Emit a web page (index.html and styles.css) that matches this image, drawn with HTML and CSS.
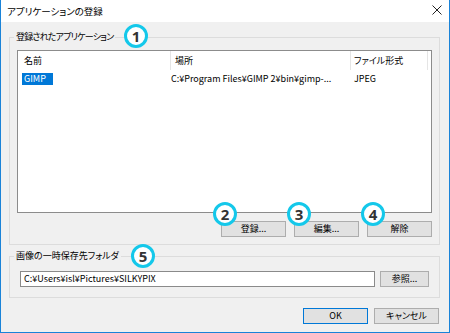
FILE: index.html
```html
<!DOCTYPE html>
<html lang="ja">
<head>
  <meta charset="UTF-8">
  <title>アプリケーションの登録</title>
  <link rel="stylesheet" href="styles.css">
</head>
<body>
  <div class="window">
    <div class="titlebar">
      <span class="title">アプリケーションの登録</span>
      <svg class="close" width="10" height="10" viewBox="0 0 10 10">
        <path d="M0.5 0.5 L9.5 9.5 M9.5 0.5 L0.5 9.5" stroke="#222" stroke-width="1" fill="none"/>
      </svg>
    </div>

    <div class="content">
      <fieldset class="group apps">
        <legend>登録されたアプリケーション</legend>
        <div class="listview">
          <div class="lv-head">
            <div class="col c1">名前</div>
            <div class="col c2">場所</div>
            <div class="col c3">ファイル形式</div>
          </div>
          <div class="lv-row">
            <div class="cell c1"><span class="sel">GIMP</span></div>
            <div class="cell c2">C:¥Program Files¥GIMP 2¥bin¥gimp-...</div>
            <div class="cell c3">JPEG</div>
          </div>
        </div>
        <div class="btn-row">
          <button class="btn">登録...</button>
          <button class="btn">編集...</button>
          <button class="btn">解除</button>
        </div>
      </fieldset>

      <fieldset class="group folder">
        <legend>画像の一時保存先フォルダ</legend>
        <div class="path-row">
          <div class="textbox">C:¥Users¥isl¥Pictures¥SILKYPIX</div>
          <button class="btn browse">参照...</button>
        </div>
      </fieldset>

      <div class="footer">
        <button class="btn default">OK</button>
        <button class="btn">キャンセル</button>
      </div>
    </div>

    <!-- callout markers -->
    <span class="marker m1">1</span>
    <span class="marker m2">2</span>
    <span class="marker m3">3</span>
    <span class="marker m4">4</span>
    <span class="marker m5">5</span>
  </div>
</body>
</html>
```

FILE: styles.css
```css
* {
  box-sizing: border-box;
}
body {
  margin: 0;
  background: #ffffff;
  font-family: "Noto Sans CJK JP", "Noto Sans", sans-serif;
  font-size: 9px;
  font-feature-settings: "palt";
  color: #000;
}
.window {
  position: relative;
  width: 450px;
  height: 333px;
  background: #f0f0f0;
  border: 1px solid #1a83d8;
  border-top: none;
}
.titlebar {
  height: 22px;
  background: #fff;
  display: flex;
  align-items: center;
  justify-content: space-between;
  padding: 0 7px 0 6px;
}
.title {
  font-size: 9.5px;
}
.close {
  display: block;
  margin-top: -2px;
}
.content {
  padding: 9px 9px 0 8px;
}
.group {
  margin: 0;
  padding: 0 7px 7px 7px;
  border: 1px solid #dcdcdc;
  min-width: 0;
}
.group legend {
  font-size: 9px;
  line-height: 12px;
  padding: 0 2px;
  margin-left: -3px;
}
.apps legend {
  letter-spacing: -0.8px;
}
.listview {
  margin-top: 7px;
  height: 163px;
  background: #fff;
  border: 1px solid #8c8c8c;
}
.lv-head,
.lv-row {
  display: flex;
}
.lv-head {
  height: 19px;
  align-items: center;
}
.col {
  height: 19px;
  line-height: 19px;
  padding-left: 4px;
  border-right: 1px solid #e5e5e5;
}
.c1 {
  width: 153px;
  padding-left: 6px;
}
.c2 {
  width: 180px;
}
.c3 {
  width: 77px;
  padding-left: 3px;
}
.lv-row {
  height: 14px;
  margin-top: 1px;
  align-items: center;
}
.cell.c1 {
  padding-left: 4px;
}
.sel {
  display: inline-block;
  background: #0078d7;
  color: #fff;
  line-height: 12px;
  padding: 0 2px;
  width: 31px;
}
.btn-row {
  display: flex;
  justify-content: flex-end;
  gap: 8px;
  margin-top: 8px;
}
.btn {
  width: 65px;
  height: 16px;
  margin: 0;
  padding: 0;
  background: #e1e1e1;
  border: 1px solid #adadad;
  font-family: inherit;
  font-size: 9px;
  font-feature-settings: "palt";
  color: #000;
  line-height: 14px;
}
.btn.default {
  border-color: #0078d7;
}
.folder {
  margin-top: 5px;
  padding: 9px 10px 10px 10px;
}
.folder legend {
  margin-left: -6px;
}
.path-row {
  display: flex;
  gap: 5px;
}
.textbox {
  flex: 1;
  height: 16px;
  line-height: 14px;
  background: #fff;
  border: 1px solid #8a8a8a;
  padding-left: 3px;
}
.btn.browse {
  width: 49px;
}
.footer {
  display: flex;
  justify-content: flex-end;
  gap: 6px;
  margin-top: 10px;
  padding-right: 1px;
}
.marker {
  position: absolute;
  width: 24px;
  height: 24px;
  border: 3px solid #14c8ea;
  border-radius: 50%;
  background: #fff;
  font-family: "Noto Sans", sans-serif;
  font-weight: bold;
  font-size: 15px;
  line-height: 18px;
  text-align: center;
  color: #333;
}
.m1 { left: 123px; top: 24px; }
.m2 { left: 212px; top: 202px; }
.m3 { left: 286px; top: 202px; }
.m4 { left: 360px; top: 202px; }
.m5 { left: 130px; top: 244px; }
```
